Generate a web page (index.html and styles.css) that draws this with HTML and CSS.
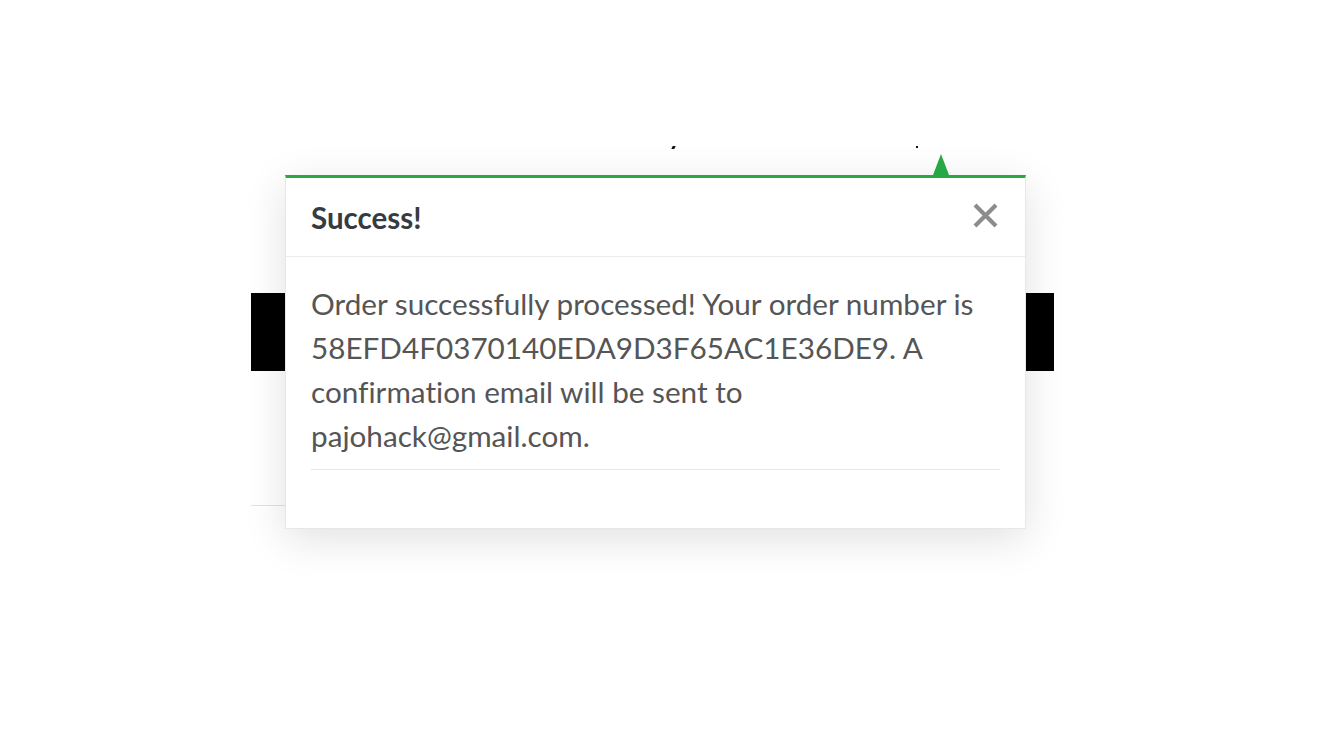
FILE: index.html
```html
<!DOCTYPE html>
<html lang="en">
<head>
<meta charset="utf-8">
<title>Order confirmation</title>
<link rel="stylesheet" href="styles.css">
</head>
<body>
  <div class="page">
    <div class="marks">
      <span class="mark mark-slash"></span>
      <span class="mark mark-dot"></span>
    </div>
    <div class="black-bar"></div>
    <div class="rule"></div>
  </div>

  <div class="popup" role="dialog" aria-labelledby="popup-title">
    <span class="arrow"></span>
    <div class="popup-header">
      <h4 id="popup-title" class="popup-title">Success!</h4>
      <button class="close" type="button" aria-label="Close">
        <svg width="25" height="25" viewBox="0 0 25 25" aria-hidden="true">
          <path d="M2 2 L23 23 M23 2 L2 23" stroke="#8c8c8c" stroke-width="4.2" stroke-linecap="butt" fill="none"/>
        </svg>
      </button>
    </div>
    <div class="popup-body">
      <p class="message">Order successfully processed! Your order number is 58EFD4F0370140EDA9D3F65AC1E36DE9. A confirmation email will be sent to pajohack@gmail.com.</p>
      <hr class="divider">
    </div>
  </div>
</body>
</html>
```

FILE: styles.css
```css
html, body {
  margin: 0;
  padding: 0;
  background: #ffffff;
}

body {
  font-family: Lato, "Open Sans", "Liberation Sans", sans-serif;
  font-variant-ligatures: none;
  width: 1323px;
  height: 738px;
  overflow: hidden;
}

.page {
  width: 803px;
  margin-left: 251px;
  padding-top: 146px;
  display: flex;
  flex-direction: column;
}

.marks {
  display: flex;
  height: 3px;
  align-items: flex-start;
}

.mark {
  display: block;
  background: #111;
}

.mark-slash {
  width: 3px;
  height: 3px;
  margin-left: 421px;
  transform: skewX(-25deg);
}

.mark-dot {
  width: 2px;
  height: 2px;
  margin-left: 241px;
}

.black-bar {
  margin-top: 144px;
  height: 78px;
  background: #000000;
}

.rule {
  margin-top: 134px;
  width: 700px;
  height: 1px;
  background: #e2e2e2;
}

.popup {
  position: absolute;
  left: 285px;
  top: 175px;
  width: 739px;
  background: #ffffff;
  border: 1px solid rgba(0, 0, 0, 0.09);
  border-top: 3px solid #28a745;
  box-shadow: 0 10px 40px rgba(0, 0, 0, 0.12);
}

.arrow {
  position: absolute;
  left: 647px;
  top: -24px;
  width: 0;
  height: 0;
  border-left: 8.5px solid transparent;
  border-right: 8.5px solid transparent;
  border-bottom: 21px solid #28a745;
}

.popup-header {
  display: flex;
  align-items: center;
  justify-content: space-between;
  padding: 0 27px 0 25px;
  border-bottom: 1px solid #ececec;
  box-sizing: border-box;
  height: 79px;
}

.popup-title {
  margin: 0;
  font-size: 29.5px;
  font-weight: 700;
  line-height: 36px;
  color: #363b41;
  padding-top: 2px;
}

.close {
  display: flex;
  padding: 0;
  margin: 0;
  border: 0;
  background: transparent;
  cursor: pointer;
  margin-top: -3px;
}

.popup-body {
  padding: 25px 25px 58px 25px;
}

.message {
  margin: 0;
  font-size: 29.7px;
  line-height: 44px;
  color: #555555;
}

.divider {
  margin: 11px 0 0 0;
  border: 0;
  height: 1px;
  background: #e6e6e6;
}
```
